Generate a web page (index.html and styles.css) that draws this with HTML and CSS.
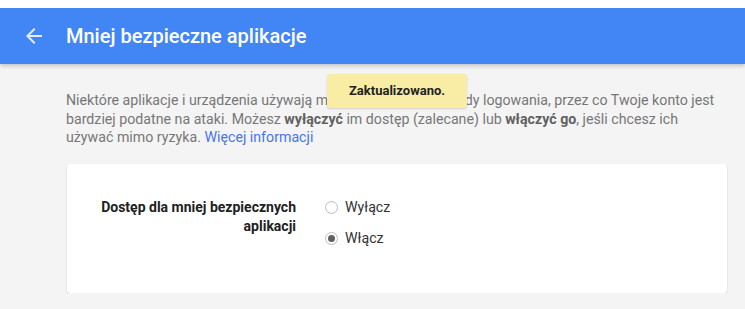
FILE: index.html
```html
<!DOCTYPE html>
<html lang="pl">
<head>
    <meta charset="UTF-8">
    <meta name="viewport" content="width=device-width, initial-scale=1.0">
    <title>Mniej bezpieczne aplikacje</title>
    <link rel="stylesheet" href="styles.css">
</head>
<body>
    <header class="topbar">
        <svg class="back" viewBox="0 0 24 24" width="24" height="24"><path d="M20 11H7.83l5.59-5.59L12 4l-8 8 8 8 1.41-1.41L7.83 13H20v-2z"/></svg>
        <h1>Mniej bezpieczne aplikacje</h1>
    </header>

    <div class="toast">Zaktualizowano.</div>

    <main class="content">
        <p class="intro">Niektóre aplikacje i urządzenia używają mniej bezpiecznej metody logowania, przez co Twoje konto jest bardziej podatne na ataki. Możesz <strong>wyłączyć</strong> im dostęp (zalecane) lub <strong>włączyć go</strong>, jeśli chcesz ich używać mimo ryzyka. <a href="#">Więcej informacji</a></p>

        <div class="card">
            <div class="label">Dostęp dla mniej bezpiecznych aplikacji</div>
            <div class="options">
                <label class="option"><span class="radio"></span>Wyłącz</label>
                <label class="option"><span class="radio checked"></span>Włącz</label>
            </div>
        </div>
    </main>
</body>
</html>
```

FILE: styles.css
```css
body {
    margin: 0;
    background-color: #f4f4f4;
    font-family: Roboto, "Liberation Sans", Arial, sans-serif;
    color: #212121;
}
.topbar {
    border-top: 8px solid #fff;
    height: 56px;
    background-color: #4285f4;
    display: flex;
    align-items: center;
    gap: 20px;
    padding-left: 22px;
    box-shadow: 0 2px 4px rgba(0, 0, 0, 0.2);
}
.back {
    fill: rgba(255, 255, 255, 0.85);
}
.topbar h1 {
    margin: 0;
    color: #fff;
    font-size: 20px;
    font-weight: 500;
}
.toast {
    position: absolute;
    left: 327px;
    top: 74px;
    width: 140px;
    height: 34px;
    line-height: 34px;
    text-align: center;
    background-color: #f9eda5;
    border-radius: 3px;
    box-shadow: 0 1px 2px rgba(0, 0, 0, 0.15);
    font-size: 13px;
    font-weight: 700;
    color: #222;
}
.content {
    margin-left: 66px;
    width: 661px;
}
.intro {
    margin: 27px 0 0;
    width: 655px;
    font-size: 14.2px;
    line-height: 18.5px;
    color: #777;
}
.intro strong {
    color: #616161;
}
.intro a {
    color: #4a74ea;
    text-decoration: none;
}
.card {
    margin: 17px 0 0 1px;
    background-color: #fff;
    border-radius: 3px;
    box-shadow: 0 1px 2px rgba(0, 0, 0, 0.18);
    padding: 28px 24px 39px;
    display: grid;
    grid-template-columns: 205px 1fr;
    gap: 29px;
}
.label {
    padding-top: 6px;
    text-align: right;
    font-size: 14px;
    font-weight: 700;
    line-height: 19px;
    color: #212121;
}
.options {
    display: flex;
    flex-direction: column;
}
.option {
    display: flex;
    align-items: center;
    gap: 7px;
    height: 31px;
    font-size: 14.2px;
    color: #333;
}
.radio {
    width: 11px;
    height: 11px;
    border: 1px solid #bdbdbd;
    border-radius: 50%;
    display: flex;
    align-items: center;
    justify-content: center;
}
.radio.checked::after {
    content: "";
    width: 7px;
    height: 7px;
    border-radius: 50%;
    background-color: #616161;
}
```
